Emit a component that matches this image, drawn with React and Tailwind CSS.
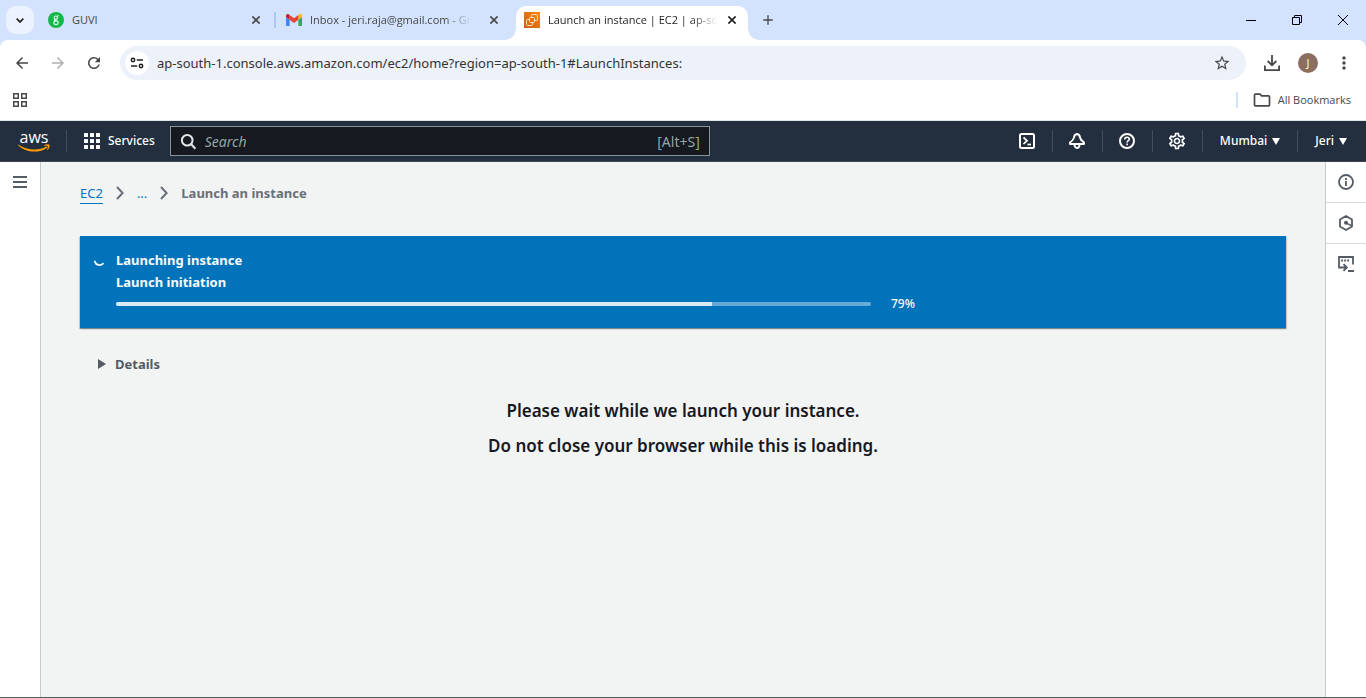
import React from "react";
import {
  MdAdd,
  MdArrowBack,
  MdArrowForward,
  MdMoreVert,
  MdOutlineFolder,
  MdOutlineSettings,
  MdRefresh,
  MdStarOutline,
} from "react-icons/md";

/* ---------- favicons ---------- */

function GuviIcon() {
  return (
    <svg viewBox="0 0 16 16" className="size-4 shrink-0" aria-hidden="true">
      <circle cx="8" cy="8" r="8" fill="#12b948" />
      <g fill="none" stroke="#e9fbef" strokeWidth="1.1" strokeLinecap="round">
        <circle cx="7.800" cy="5.700" r="1.700" />
        <path d="M9.200 4.400 10.200 3.700M7 7.500c-1 .6-.4 1.200.9 1.300" />
        <ellipse cx="8" cy="10.700" rx="2.100" ry="1.800" />
      </g>
    </svg>
  );
}

function GmailIcon() {
  return (
    <svg viewBox="52 42 88 66" className="h-[12px] w-4 shrink-0" aria-hidden="true">
      <path fill="#4285f4" d="M58 108h14V74L52 59v43c0 3.320 2.690 6 6 6" />
      <path fill="#34a853" d="M120 108h14c3.320 0 6-2.690 6-6V59l-20 15" />
      <path fill="#fbbc04" d="M120 48v26l20-15v-8c0-7.420-8.470-11.650-14.400-7.200" />
      <path fill="#ea4335" d="M72 74V48l24 18 24-18v26L96 92" />
      <path fill="#c5221f" d="M52 51v8l20 15V48l-5.600-4.200c-5.940-4.450-14.400-.22-14.400 7.200" />
    </svg>
  );
}

function Ec2Icon() {
  return (
    <svg viewBox="0 0 16 16" className="size-4 shrink-0" aria-hidden="true">
      <defs>
        <linearGradient id="ec2" x1="0" y1="1" x2="1" y2="0">
          <stop offset="0" stopColor="#d05c17" />
          <stop offset="1" stopColor="#f58a0b" />
        </linearGradient>
      </defs>
      <rect width="16" height="16" fill="url(#ec2)" />
      <g fill="none" stroke="#fbe3c6" strokeWidth="1">
        <rect x="5.500" y="5.500" width="5" height="5" rx="1" />
        <path d="M7.500 5.500V3.500a1 1 0 0 1 1-1h4a1 1 0 0 1 1 1v4a1 1 0 0 1-1 1h-2" />
        <path d="M5.500 7.500h-2a1 1 0 0 0-1 1v4a1 1 0 0 0 1 1h4a1 1 0 0 0 1-1v-2" />
      </g>
    </svg>
  );
}

/* ---------- browser window ---------- */

function Tab({ icon, title, active }) {
  return (
    <div
      className={
        active
          ? "relative flex h-[34px] w-[232px] items-center gap-2 rounded-t-[10px] bg-white pl-2 pr-2"
          : "relative flex h-[34px] w-[232px] items-center gap-2 pl-2 pr-2"
      }
    >
      {active && (
        <>
          <span className="absolute bottom-0 left-[-10px] size-[10px] bg-[radial-gradient(circle_at_0_0,#d3e3fd_9px,#ffffff_10px)]" />
          <span className="absolute bottom-0 right-[-10px] size-[10px] bg-[radial-gradient(circle_at_100%_0,#d3e3fd_9px,#ffffff_10px)]" />
        </>
      )}
      <button
        type="button"
        className={
          active
            ? "flex min-w-0 flex-1 items-center gap-2 pb-[6px] text-left text-[#1f1f1f]"
            : "flex min-w-0 flex-1 items-center gap-2 pb-[6px] text-left text-[#474747]"
        }
      >
        {icon}
        <span
          className={
            title.length > 20
              ? "whitespace-nowrap text-[11px] leading-4 [mask-image:linear-gradient(to_right,black_84%,transparent)]"
              : "whitespace-nowrap text-[11px] leading-4"
          }
        >
          {title}
        </span>
      </button>
      <button
        type="button"
        aria-label="Close tab"
        className={
          active
            ? "mb-[6px] flex size-4 items-center justify-center text-[#1f1f1f]"
            : "mb-[6px] flex size-4 items-center justify-center text-[#474747]"
        }
      >
        <svg viewBox="0 0 8 8" className="size-2" fill="none" stroke="currentColor" strokeWidth="1.600" aria-hidden="true">
          <path d="m.4.4 7.200 7.200M7.600.4.4 7.600" />
        </svg>
      </button>
    </div>
  );
}

function TabStrip() {
  return (
    <div className="flex h-10 items-end bg-[#d3e3fd]">
      <button
        type="button"
        aria-label="Search tabs"
        className="mb-[6px] ml-[6px] mr-[6px] flex size-7 items-center justify-center rounded-[10px] bg-[#ecf3fe]"
      >
        <svg viewBox="0 0 8 5" className="h-[5px] w-2" aria-hidden="true">
          <path d="M.7.7 4 4 7.300.7" fill="none" stroke="#1f1f1f" strokeWidth="1.700" />
        </svg>
      </button>
      <Tab icon={<GuviIcon />} title="GUVI" />
      <span className="mx-[2px] mb-3 h-4 w-[2px] bg-[#a8c7fa]" />
      <Tab icon={<GmailIcon />} title="Inbox - jeri.raja@gmail.com - Gr" />
      <span className="w-[6px]" />
      <Tab icon={<Ec2Icon />} title="Launch an instance | EC2 | ap-so" active />
      <button
        type="button"
        aria-label="New tab"
        className="mb-[6px] ml-[6px] flex size-7 items-center justify-center text-[#474747]"
      >
        <MdAdd className="size-4" />
      </button>
      <div className="ml-auto flex h-10 text-black">
        <button type="button" aria-label="Minimize" className="flex w-[46px] items-center justify-center">
          <svg viewBox="0 0 10 10" className="size-[10px]" aria-hidden="true">
            <path d="M0 5.500h10" stroke="currentColor" />
          </svg>
        </button>
        <button type="button" aria-label="Restore" className="flex w-[46px] items-center justify-center">
          <svg viewBox="0 0 10 10" className="size-[10px]" fill="none" stroke="currentColor" aria-hidden="true">
            <path d="M.5 2.500h7v7h-7zM2.500 2.500v-2h7v7h-2" />
          </svg>
        </button>
        <button type="button" aria-label="Close" className="flex w-[46px] items-center justify-center">
          <svg viewBox="0 0 10 10" className="size-[10px]" fill="none" stroke="currentColor" aria-hidden="true">
            <path d="M0 0l10 10M10 0L0 10" />
          </svg>
        </button>
      </div>
    </div>
  );
}

function ToolButton({ label, className = "text-[#474747]", children }) {
  return (
    <button type="button" aria-label={label} className="flex size-9 shrink-0 items-center justify-center">
      <span className={className}>{children}</span>
    </button>
  );
}

function Toolbar() {
  return (
    <div className="bg-[#d3e3fd]">
      <div className="flex h-[46px] items-center rounded-t-[8px] bg-white px-1">
        <ToolButton label="Back">
          <MdArrowBack className="size-[18px]" />
        </ToolButton>
        <ToolButton label="Forward" className="text-[#b0b0b0]">
          <MdArrowForward className="size-[18px]" />
        </ToolButton>
        <ToolButton label="Reload">
          <MdRefresh className="size-[18px]" />
        </ToolButton>
        <div className="mx-2 flex h-[34px] min-w-0 flex-1 items-center gap-2 rounded-full bg-[#ecf1fa] pl-[5px] pr-[15px]">
          <button
            type="button"
            aria-label="View site information"
            className="flex size-6 items-center justify-center rounded-full bg-white"
          >
            <svg viewBox="0 0 14 12" className="h-3 w-[14px]" fill="none" stroke="#1f1f1f" strokeWidth="1.500" aria-hidden="true">
              <circle cx="3" cy="3" r="1.700" />
              <path d="M6.800 3H13M1 9h6.200" />
              <circle cx="11" cy="9" r="1.700" />
            </svg>
          </button>
          <input
            type="text"
            aria-label="Address and search bar"
            defaultValue="ap-south-1.console.aws.amazon.com/ec2/home?region=ap-south-1#LaunchInstances:"
            className="h-6 min-w-0 flex-1 bg-transparent font-['Noto_Sans',sans-serif] text-[13px] text-[#333333] outline-none"
          />
          <button type="button" aria-label="Bookmark this tab" className="text-[#474747]">
            <MdStarOutline className="size-[18px]" />
          </button>
        </div>
        <ToolButton label="Downloads">
          <svg viewBox="0 0 16 16" className="size-4" fill="none" stroke="currentColor" strokeWidth="1.800" aria-hidden="true">
            <path d="M8 0v10M3.700 6 8 10.300 12.300 6M.9 10.500v4.600h14.200v-4.600" />
          </svg>
        </ToolButton>
        <ToolButton
          label="Profile"
          className="flex size-5 items-center justify-center rounded-full bg-[#8d6e63] text-[11px] text-white"
        >
          J
        </ToolButton>
        <ToolButton label="Browser menu">
          <MdMoreVert className="size-5" />
        </ToolButton>
      </div>
      <div className="flex h-[35px] items-center border-b border-[#dde5e2] bg-white pb-[6px] pl-[13px] pr-[15px]">
        <button type="button" aria-label="Apps">
          <svg viewBox="0 0 14 14" className="size-[14px]" fill="none" stroke="#474747" strokeWidth="1.500" aria-hidden="true">
            <path d="M.75.75h4.500v4.500H.75zM8.750.75h4.500v4.500h-4.500zM.75 8.750h4.500v4.500H.75zM8.750 8.750h4.500v4.500h-4.500z" />
          </svg>
        </button>
        <span className="ml-auto h-4 w-[2px] bg-[#d3e3fd]" />
        <button type="button" className="ml-[14px] flex items-center gap-[6px] text-[11px] leading-4 text-[#474747]">
          <MdOutlineFolder className="size-5" />
          All Bookmarks
        </button>
      </div>
    </div>
  );
}

/* ---------- console header ---------- */

function AwsLogo() {
  return (
    <a href="#home" aria-label="AWS home" className="flex w-8 flex-col items-center text-white">
      <span className="font-['Open_Sans',sans-serif] text-[16px] font-medium leading-[14px]">aws</span>
      <svg viewBox="0 0 32 8" className="h-2 w-8" aria-hidden="true">
        <path d="M.6.700C8 6 20 7.300 28.600 2.600c1-.5 1.600.4.600 1.100C21.600 9.200 8 9.200.300 1.500-.2 1 .1.400.6.700z" fill="#ff9900" />
        <path d="M26 1.200c1.600-1.100 4.600-1 5.300-.5.700.6-.1 4-1.700 5.400-.3.200-.6.100-.5-.3.500-1.100 1.200-3.200.8-3.800-.5-.6-2.700-.3-3.700-.2-.4 0-.4-.4-.2-.6z" fill="#ff9900" />
      </svg>
    </a>
  );
}

function Divider() {
  return <span className="h-[22px] w-px shrink-0 bg-[#414d5c]" />;
}

function HeaderIcon({ label, children }) {
  return (
    <button type="button" aria-label={label} className="flex w-[49px] shrink-0 items-center justify-center text-white">
      {children}
    </button>
  );
}

function ConsoleHeader() {
  return (
    <header className="flex h-[41px] items-center border-b border-[#414750] bg-[#232f3e] pl-[18px] font-['Noto_Sans',sans-serif] text-[12px] text-white">
      <AwsLogo />
      <span className="w-4" />
      <Divider />
      <button type="button" className="ml-[17px] mr-[15px] flex items-center gap-2 font-medium">
        <svg viewBox="0 0 16 16" className="size-4" fill="currentColor" aria-hidden="true">
          {[0, 6, 12].map((y) =>
            [0, 6, 12].map((x) => <rect key={`${x}-${y}`} x={x} y={y} width="4" height="4" rx=".5" />)
          )}
        </svg>
        Services
      </button>
      <label className="flex h-[30px] w-[540px] min-w-0 items-center gap-2 border border-[#859596] bg-[#16191f] px-[9px] text-[14px] text-[#95a5a6]">
        <svg viewBox="0 0 16 16" className="size-[17px] shrink-0" fill="none" stroke="#e3e6e6" strokeWidth="1.900" aria-hidden="true">
          <circle cx="6.800" cy="6.800" r="5" />
          <path d="m10.300 10.300 4.200 4.500" />
        </svg>
        <input
          type="search"
          aria-label="Search"
          placeholder="Search"
          className="min-w-0 flex-1 bg-transparent outline-none placeholder:italic placeholder:text-[#95a5a6]"
        />
        <span>[Alt+S]</span>
      </label>
      <nav className="ml-auto flex items-center" aria-label="Account tools">
        <HeaderIcon label="CloudShell">
          <svg viewBox="0 0 16 16" className="size-4" fill="none" stroke="currentColor" strokeWidth="2" aria-hidden="true">
            <rect x="1" y="1" width="14" height="14" rx="1.500" />
            <path d="M4.500 4.500 8 7.700 4.500 11" strokeWidth="1.700" />
            <path d="M8.500 11.500H12" strokeWidth="1.700" />
          </svg>
        </HeaderIcon>
        <Divider />
        <HeaderIcon label="Notifications">
          <svg viewBox="0 0 16 16" className="size-4" fill="none" stroke="currentColor" strokeWidth="1.900" strokeLinejoin="round" aria-hidden="true">
            <path d="M8 1C6.300 1.200 5.200 2.800 5 4.500 4.700 6.700 3.500 7.700 1 9.500V11h14V9.500c-2.500-1.800-3.700-2.800-4-5C10.800 2.800 9.700 1.200 8 1z" />
            <path d="M5.500 11.500c0 2 1 3.500 2.500 3.500s2.500-1.500 2.500-3.500" />
          </svg>
        </HeaderIcon>
        <Divider />
        <HeaderIcon label="Help">
          <svg viewBox="0 0 16 16" className="size-4" fill="none" stroke="currentColor" strokeWidth="2" aria-hidden="true">
            <circle cx="8" cy="8" r="7" />
            <path d="M5.700 6.500c0-1.500 1-2.300 2.300-2.300s2.300.8 2.300 2c0 1.500-2.200 1.600-2.200 3.400M8.100 10.600v1.700" strokeWidth="1.600" />
          </svg>
        </HeaderIcon>
        <Divider />
        <HeaderIcon label="Settings">
          <MdOutlineSettings className="size-5" />
        </HeaderIcon>
        <Divider />
        <button type="button" className="flex items-center gap-[5px] px-[17px] font-medium">
          Mumbai
          <Caret />
        </button>
        <Divider />
        <button type="button" className="flex items-center gap-[5px] pl-[17px] pr-[19px] font-medium">
          Jeri
          <Caret />
        </button>
      </nav>
    </header>
  );
}

function Caret() {
  return (
    <svg viewBox="0 0 8 7" className="h-[7px] w-2" fill="currentColor" aria-hidden="true">
      <path d="M0 0h8L4 7z" />
    </svg>
  );
}

/* ---------- page ---------- */

function Chevron() {
  return (
    <svg viewBox="0 0 8 14" className="h-[14px] w-2 shrink-0" fill="none" stroke="#687078" strokeWidth="2" aria-hidden="true">
      <path d="m1 1 5.600 6L1 13" />
    </svg>
  );
}

function LaunchBanner({ percent }) {
  return (
    <section
      aria-label="Launch status"
      className="flex gap-3 bg-[#0073bb] py-[13px] pl-[14px] pr-5 text-[#fafafa] shadow-[0_1px_1px_0_rgba(0,28,36,0.3),1px_1px_1px_0_rgba(0,28,36,0.15),-1px_1px_1px_0_rgba(0,28,36,0.15)]"
    >
      <svg viewBox="0 0 10 22" className="h-[22px] w-[10px] shrink-0" fill="none" stroke="currentColor" strokeWidth="1.800" strokeLinecap="round" aria-hidden="true">
        <path d="M.8 12.500C1.800 16.500 6.500 17 9 14.600" />
      </svg>
      <div className="min-w-0 flex-1 text-[13px] font-bold leading-[22px]">
        <h2>Launching instance</h2>
        <p id="stage">Launch initiation</p>
        <div className="flex items-center gap-5">
          <div
            role="progressbar"
            aria-labelledby="stage"
            aria-valuenow={percent}
            aria-valuemin={0}
            aria-valuemax={100}
            className="h-1 w-full max-w-[755px] overflow-hidden rounded-full bg-[#66abd6]"
          >
            <div className="h-full bg-[#dcecf5]" style={{ width: `${percent}%` }} />
          </div>
          <span className="text-[12px] font-medium">{percent}%</span>
        </div>
      </div>
    </section>
  );
}

function RailButton({ label, last, children }) {
  return (
    <button
      type="button"
      aria-label={label}
      className={
        last
          ? "flex h-10 w-full items-center justify-center text-[#545b64]"
          : "flex h-[41px] w-full items-center justify-center border-b border-[#d5dbdb] text-[#545b64]"
      }
    >
      {children}
    </button>
  );
}

function ToolRail() {
  return (
    <aside className="w-[41px] shrink-0 border-l border-[#c6cccc] bg-white" aria-label="Tools">
      <RailButton label="Info">
        <svg viewBox="0 0 16 16" className="size-4" fill="none" stroke="currentColor" strokeWidth="1.800" aria-hidden="true">
          <circle cx="8" cy="8" r="7" />
          <path d="M8 7v5M8 4v1.900" />
        </svg>
      </RailButton>
      <RailButton label="Tutorials">
        <svg viewBox="0 0 16 16" className="size-4" fill="none" stroke="currentColor" strokeWidth="1.800" strokeLinejoin="round" aria-hidden="true">
          <path d="M8 1l6 3.500v7L8 15l-6-3.500v-7z" />
          <circle cx="8" cy="7.800" r="2" fill="currentColor" stroke="none" />
          <path d="M8.500 8.200 14 11" strokeWidth="1.500" />
        </svg>
      </RailButton>
      <RailButton label="Recorder" last>
        <svg viewBox="0 0 16 16" className="size-4" fill="none" stroke="currentColor" strokeWidth="1.800" aria-hidden="true">
          <path d="M15 8.500V1H1v10.500h7M5.500 8.200 8.800 11.500 5.500 14.800M10 15h6" />
          <path d="M3.200 4.500h1.900M6.200 4.500h1.900M9.200 4.500h1.900" />
        </svg>
      </RailButton>
    </aside>
  );
}

export default function App() {
  return (
    <div className="flex min-h-screen flex-col bg-white font-['Open_Sans',sans-serif]">
      <TabStrip />
      <Toolbar />
      <ConsoleHeader />
      <div className="flex flex-1 border-b border-[#545b64] font-['Noto_Sans',sans-serif] text-[#545b64]">
        <aside className="w-[41px] shrink-0 border-r border-[#c6cccc] bg-white" aria-label="Navigation">
          <button type="button" aria-label="Open navigation" className="flex h-10 w-10 items-center justify-center">
            <svg viewBox="0 0 14 12" className="h-3 w-[14px]" stroke="currentColor" strokeWidth="2" aria-hidden="true">
              <path d="M0 1h14M0 6h14M0 11h14" />
            </svg>
          </button>
        </aside>
        <main className="min-w-0 flex-1 bg-[#f2f3f3] px-[39px] pt-5">
          <nav aria-label="Breadcrumbs" className="flex items-center gap-[13px] text-[13px] leading-[22px]">
            <a href="#ec2" className="border-b border-[#0073bb] leading-[20px] text-[#0073bb]">
              EC2
            </a>
            <Chevron />
            <button type="button" className="text-[#0073bb]">...</button>
            <Chevron />
            <span className="font-bold text-[#687078]">Launch an instance</span>
          </nav>
          <div className="mt-8">
            <LaunchBanner percent={79} />
          </div>
          <button type="button" className="ml-[18px] mt-[25px] flex items-center gap-[9px] text-[13px] font-bold leading-[22px]">
            <svg viewBox="0 0 8 10" className="h-[10px] w-2" fill="currentColor" aria-hidden="true">
              <path d="M0 0l8 5-8 5z" />
            </svg>
            Details
          </button>
          <div className="mt-[18px] text-center text-[17px] font-semibold leading-[35px] text-[#16191f]">
            <p>Please wait while we launch your instance.</p>
            <p>Do not close your browser while this is loading.</p>
          </div>
        </main>
        <ToolRail />
      </div>
    </div>
  );
}
